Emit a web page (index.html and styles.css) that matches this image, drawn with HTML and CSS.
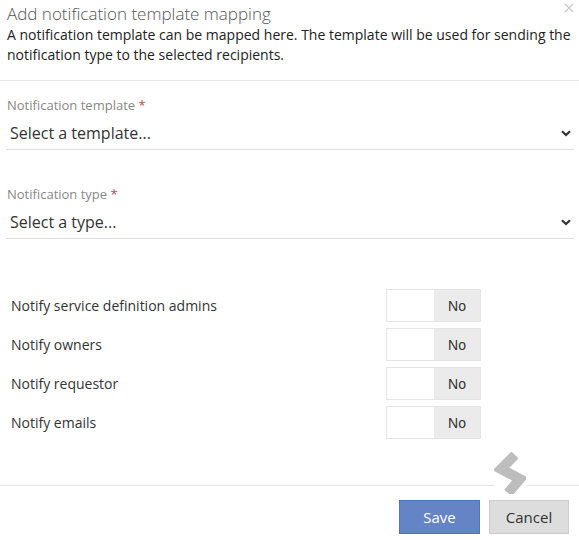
FILE: index.html
```html
<!DOCTYPE html>
<html lang="en">
<head>
  <meta charset="UTF-8" />
  <meta name="viewport" content="width=device-width, initial-scale=1.0"/>
  <title>Add notification template mapping</title>
  <link rel="stylesheet" href="styles.css">
</head>
<body>

  <div class="modal">
    <div class="modal-header">
      <button class="close-btn" type="button" aria-label="Close">
        <svg width="10" height="10" viewBox="0 0 10 10"><path d="M1 1L9 9M9 1L1 9" stroke="#c8c8c8" stroke-width="1.2"/></svg>
      </button>
      <h3>Add notification template mapping</h3>
      <p>A notification template can be mapped here. The template will be used for sending the notification type to the selected recipients.</p>
    </div>

    <div class="modal-body">
      <div class="form-group">
        <label>Notification template <span class="req">*</span></label>
        <div class="dropdown">
          <span>Select a template...</span>
          <svg width="10" height="7" viewBox="0 0 10 7"><path d="M1 1.2L5 5L9 1.2" fill="none" stroke="#333" stroke-width="2.2"/></svg>
        </div>
      </div>

      <div class="form-group">
        <label>Notification type <span class="req">*</span></label>
        <div class="dropdown">
          <span>Select a type...</span>
          <svg width="10" height="7" viewBox="0 0 10 7"><path d="M1 1.2L5 5L9 1.2" fill="none" stroke="#333" stroke-width="2.2"/></svg>
        </div>
      </div>

      <div class="toggle-list">
        <div class="toggle-row">
          <span>Notify service definition admins</span>
          <div class="toggle"><span class="toggle-off"></span><span class="toggle-label">No</span></div>
        </div>
        <div class="toggle-row">
          <span>Notify owners</span>
          <div class="toggle"><span class="toggle-off"></span><span class="toggle-label">No</span></div>
        </div>
        <div class="toggle-row">
          <span>Notify requestor</span>
          <div class="toggle"><span class="toggle-off"></span><span class="toggle-label">No</span></div>
        </div>
        <div class="toggle-row">
          <span>Notify emails</span>
          <div class="toggle"><span class="toggle-off"></span><span class="toggle-label">No</span></div>
        </div>
      </div>
    </div>

    <div class="modal-footer">
      <!-- resize grip sitting on the footer line -->
      <svg class="grip" width="32" height="42" viewBox="0 0 32 42">
        <rect width="32" height="42" fill="#fff"/>
        <polyline points="21,3 7,17 26,27 14,41" fill="none" stroke="#bdbdbd" stroke-width="10" stroke-linejoin="miter"/>
      </svg>
      <button type="button" class="btn btn-primary">Save</button>
      <button type="button" class="btn btn-default">Cancel</button>
    </div>
  </div>

</body>
</html>
```

FILE: styles.css
```css
* {
  box-sizing: border-box;
  margin: 0;
  padding: 0;
}

body {
  font-family: 'Open Sans', 'Segoe UI', sans-serif;
  background-color: #ffffff;
  color: #222;
  width: 579px;
  height: 540px;
  overflow: hidden;
}

.modal {
  display: flex;
  flex-direction: column;
}

.modal-header {
  position: relative;
  padding: 3px 7px 15px 7px;
  border-bottom: 1px solid #e5e5e5;
}

.modal-header h3 {
  font-size: 17px;
  font-weight: 300;
  line-height: 22px;
  color: #555;
}

.modal-header p {
  font-size: 14px;
  line-height: 20px;
  color: #222;
}

.close-btn {
  position: absolute;
  top: 1px;
  right: 5px;
  border: none;
  background: none;
  cursor: pointer;
}

.modal-body {
  padding: 15px 5px 0 6px;
}

.form-group {
  margin-bottom: 35px;
}

.form-group label {
  display: block;
  font-size: 13px;
  line-height: 18px;
  color: #888;
  padding-left: 1px;
  margin-bottom: 4px;
}

.req {
  color: #b94a48;
}

.dropdown {
  display: flex;
  align-items: center;
  justify-content: space-between;
  height: 32px;
  padding: 0 3px 1px 4px;
  border-bottom: 1px solid #dcdcdc;
  font-size: 16px;
  color: #333;
}

.toggle-list {
  display: flex;
  flex-direction: column;
  gap: 6px;
  margin-top: 50px;
}

.toggle-row {
  display: flex;
  align-items: center;
  height: 33px;
  padding-left: 5px;
  font-size: 14px;
  color: #333;
}

.toggle-row > span {
  width: 375px;
}

.toggle {
  display: flex;
  width: 95px;
  height: 33px;
  border: 1px solid #e4e4e4;
}

.toggle-off {
  width: 47px;
  background-color: #fff;
}

.toggle-label {
  flex: 1;
  display: flex;
  align-items: center;
  justify-content: center;
  background-color: #ebebeb;
  font-family: 'Liberation Sans', Arial, sans-serif;
  font-size: 14px;
  color: #333;
}

.modal-footer {
  position: relative;
  display: flex;
  justify-content: flex-end;
  align-items: flex-start;
  gap: 9px;
  margin-top: 46px;
  padding: 14px 10px 0 0;
  border-top: 1px solid #e5e5e5;
}

.grip {
  position: absolute;
  left: 494px;
  top: -34px;
}

.btn {
  height: 34px;
  font-family: 'Open Sans', 'Segoe UI', sans-serif;
  font-size: 15px;
  cursor: pointer;
}

.btn-primary {
  width: 81px;
  background-color: #6484c6;
  border: 1px solid #5274b8;
  color: #fff;
}

.btn-default {
  width: 80px;
  background-color: #dddddd;
  border: 1px solid #cccccc;
  color: #333;
}
```
